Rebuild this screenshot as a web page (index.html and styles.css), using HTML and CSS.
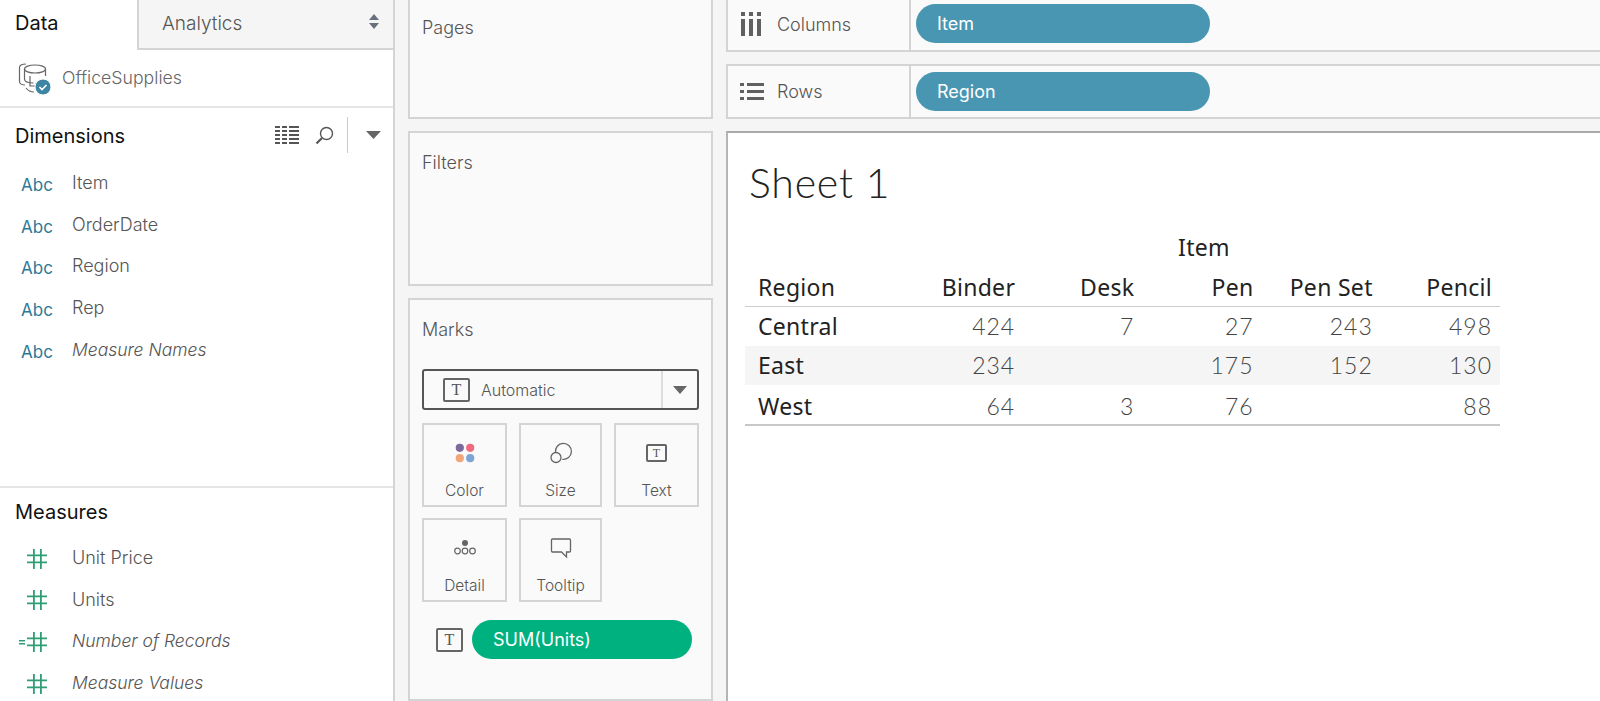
FILE: index.html
```html
<!DOCTYPE html>
<html lang="en">
<head>
<meta charset="utf-8">
<title>Sheet 1</title>
<link rel="stylesheet" href="styles.css">
</head>
<body>
<div class="app">
  <aside class="sidebar">
    <div class="tabs">
      <div class="tab tab-active">Data</div>
      <div class="tab tab-other"><span>Analytics</span>
        <svg class="updown" width="12" height="15" viewBox="0 0 12 15"><path d="M6 0l5 6H1zM6 15l-5-6h10z" fill="#67707c"/></svg>
      </div>
    </div>
    <div class="source">
      <svg class="source-icon" width="34" height="34" viewBox="0 0 34 34" fill="none" stroke="#666" stroke-width="1.2">
        <path d="M8 2C4.500 2 1.500 3 1.500 5.500v14c0 2 2.500 3.500 5.500 3.500"/>
        <ellipse cx="17" cy="7" rx="10.500" ry="4" fill="#fff"/>
        <path d="M6.500 7v10c0 2.500 4 4 9 4M27.500 7v7"/>
        <path d="M12 14v10h8M17.500 21l3 3-3 3M8 26c2 2.500 4 4 8 4"/>
        <circle cx="25" cy="25" r="8" fill="#3c85a3" stroke="#fff" stroke-width="1"/>
        <path d="M21.500 25l2.500 2.500 4.500-4.500" stroke="#fff" stroke-width="1.600"/>
      </svg>
      <span>OfficeSupplies</span>
    </div>
    <section class="dims">
      <div class="sec-head">
        <h2>Dimensions</h2>
        <div class="tools">
          <svg width="24" height="18" viewBox="0 0 24 18" fill="#555"><path d="M0 0h5v2H0zM7 0h5v2H7zM14 0h10v2H14zM0 4h5v2H0zM7 4h5v2H7zM14 4h10v2H14zM0 8h5v2H0zM7 8h5v2H7zM14 8h10v2H14zM0 12h5v2H0zM7 12h5v2H7zM14 12h10v2H14zM0 16h5v2H0zM7 16h5v2H7zM14 16h10v2H14z"/></svg>
          <svg class="search" width="19" height="19" viewBox="0 0 19 19" fill="none" stroke="#555"><circle cx="11.500" cy="7.500" r="6" stroke-width="1.400"/><path d="M7 12l-5.500 5.500" stroke-width="2.200"/></svg>
          <i class="tool-sep"></i>
          <svg class="menu-arrow" width="15" height="8" viewBox="0 0 15 8"><path d="M0 0h15l-7.500 8z" fill="#666"/></svg>
        </div>
      </div>
      <ul class="fields">
        <li><span class="abc">Abc</span><span>Item</span></li>
        <li><span class="abc">Abc</span><span>OrderDate</span></li>
        <li><span class="abc">Abc</span><span>Region</span></li>
        <li><span class="abc">Abc</span><span>Rep</span></li>
        <li><span class="abc">Abc</span><em>Measure Names</em></li>
      </ul>
    </section>
    <section class="meas">
      <div class="sec-head"><h2>Measures</h2></div>
      <ul class="fields fields-m">
        <li><svg class="hash" width="28" height="20" viewBox="0 0 28 20"><use href="#h"/></svg><span>Unit Price</span></li>
        <li><svg class="hash" width="28" height="20" viewBox="0 0 28 20"><use href="#h"/></svg><span>Units</span></li>
        <li><svg class="hash" width="28" height="20" viewBox="0 0 28 20"><path d="M0 8h6v1.500H0zM0 11h6v1.500H0z" fill="#2f9e75"/><use href="#h"/></svg><em>Number of Records</em></li>
        <li><svg class="hash" width="28" height="20" viewBox="0 0 28 20"><use href="#h"/></svg><em>Measure Values</em></li>
      </ul>
      <svg class="defs" width="0" height="0"><defs><g id="h" fill="#2f9e75"><path d="M8 5.500h20v1.800H8zM8 12.500h20v1.800H8zM14 0h1.800v20H14zM21 0h1.800v20H21z"/></g></defs></svg>
    </section>
  </aside>

  <div class="cards">
    <section class="card card-pages"><h3>Pages</h3></section>
    <section class="card card-filters"><h3>Filters</h3></section>
    <section class="card card-marks">
      <h3>Marks</h3>
      <div class="select">
        <div class="select-main">
          <span class="t-box">T</span>
          <span>Automatic</span>
        </div>
        <div class="select-arrow"><svg width="15" height="8" viewBox="0 0 15 8"><path d="M0 0h14l-7 8z" fill="#666"/></svg></div>
      </div>
      <div class="mark-grid">
        <div class="mark">
          <svg width="24" height="22" viewBox="0 0 24 22"><circle cx="6.800" cy="5.800" r="4.100" fill="#7c6a9c"/><circle cx="17.200" cy="5.800" r="4.100" fill="#ef6a7e"/><circle cx="6.800" cy="16.200" r="4.100" fill="#f2a67c"/><circle cx="17.200" cy="16.200" r="4.100" fill="#7ea6d4"/></svg>
          <span>Color</span>
        </div>
        <div class="mark">
          <svg width="24" height="22" viewBox="0 0 24 22" fill="none" stroke="#666" stroke-width="1.300"><path d="M6.500 10.500a8 8 0 1 1 6.800 6.800"/><circle cx="7" cy="15.500" r="5"/></svg>
          <span>Size</span>
        </div>
        <div class="mark">
          <span class="t-box t-small">T</span>
          <span>Text</span>
        </div>
        <div class="mark">
          <svg width="24" height="22" viewBox="0 0 24 22" fill="none" stroke="#666" stroke-width="1.200"><circle cx="12" cy="6" r="3" fill="#666" stroke="none"/><circle cx="4.500" cy="14" r="2.800"/><circle cx="12" cy="14" r="2.800"/><circle cx="19.500" cy="14" r="2.800"/></svg>
          <span>Detail</span>
        </div>
        <div class="mark">
          <svg width="24" height="22" viewBox="0 0 24 22" fill="none" stroke="#666" stroke-width="1.300"><path d="M3.500 2h17a1 1 0 0 1 1 1v11a1 1 0 0 1-1 1h-3v5l-5-5h-9a1 1 0 0 1-1-1V3a1 1 0 0 1 1-1z"/></svg>
          <span>Tooltip</span>
        </div>
      </div>
      <div class="mark-pill-row">
        <span class="t-box">T</span>
        <div class="pill pill-green">SUM(Units)</div>
      </div>
    </section>
  </div>

  <main class="main">
    <div class="shelf shelf-cols">
      <div class="shelf-label">
        <svg width="20" height="24" viewBox="0 0 20 24" fill="#606060"><path d="M0 0h4v4H0zM8 0h4v4H8zM16 0h4v4h-4zM0 7h4v17H0zM8 7h4v17H8zM16 7h4v17h-4z"/></svg>
        <span>Columns</span>
      </div>
      <div class="shelf-body"><div class="pill pill-blue">Item</div></div>
    </div>
    <div class="shelf shelf-rows">
      <div class="shelf-label">
        <svg width="24" height="20" viewBox="0 0 24 20" fill="#606060"><path d="M0 1h4v3H0zM7 1h17v3H7zM0 8h4v3H0zM7 8h17v3H7zM0 15h4v3H0zM7 15h17v3H7z"/></svg>
        <span>Rows</span>
      </div>
      <div class="shelf-body"><div class="pill pill-blue">Region</div></div>
    </div>
    <div class="view">
      <h1>Sheet 1</h1>
      <table class="crosstab">
        <thead>
          <tr class="row-group"><th></th><th colspan="5" class="group">Item</th></tr>
          <tr class="row-head"><th class="region">Region</th><th>Binder</th><th>Desk</th><th>Pen</th><th>Pen Set</th><th>Pencil</th></tr>
        </thead>
        <tbody>
          <tr><th class="region">Central</th><td>424</td><td>7</td><td>27</td><td>243</td><td>498</td></tr>
          <tr class="band"><th class="region">East</th><td>234</td><td></td><td>175</td><td>152</td><td>130</td></tr>
          <tr class="last"><th class="region">West</th><td>64</td><td>3</td><td>76</td><td></td><td>88</td></tr>
        </tbody>
      </table>
    </div>
  </main>
</div>
</body>
</html>
```
FILE: styles.css
```css
* { box-sizing: border-box; }
html, body { margin: 0; padding: 0; }
body { font-family: Inter, "Liberation Sans", sans-serif; color: #555; background: #f5f5f5; overflow: hidden; }
.app { display: flex; width: 1600px; height: 701px; overflow: hidden; }

.sidebar { width: 395px; flex: none; background: #fff; border-right: 2px solid #d4d4d4; display: flex; flex-direction: column; font-family: Inter, sans-serif; font-size: 18px; font-weight: 300; }
.tabs { display: flex; height: 50px; flex: none; }
.tab { height: 50px; font-size: 19px; line-height: 46px; }
.tab-active { width: 137px; padding-left: 15px; color: #111; font-size: 20px; font-weight: 400; }
.tab-other { flex: 1; padding: 0 13px 0 23px; display: flex; align-items: center; justify-content: space-between; background: #f5f5f5; border-left: 2px solid #d4d4d4; border-bottom: 2px solid #d4d4d4; color: #555; }
.tab-other span { line-height: 44px; }
.updown { margin-top: -5px; }
.source { height: 58px; flex: none; display: flex; align-items: center; gap: 10px; padding: 0 0 0 18px; border-bottom: 2px solid #e6e6e6; color: #666; font-size: 17.700px; }
.source span { margin-bottom: 2px; }
.source-icon { margin-top: 2px; }
.sec-head { display: flex; align-items: center; justify-content: space-between; padding-left: 15px; }
h2 { margin: 0; padding-top: 2px; font-size: 20px; font-weight: 400; color: #111; }
.dims { height: 380px; flex: none; border-bottom: 2px solid #e6e6e6; padding-top: 9px; }
.dims .sec-head { height: 36px; }
.tools { display: flex; align-items: center; padding-right: 12px; }
.search { margin-left: 16px; }
.tool-sep { display: block; width: 1px; height: 36px; background: #ccc; margin: 0 18px 0 13px; }
.fields { list-style: none; margin: 9px 0 0; padding: 0; }
.fields li { display: flex; align-items: center; height: 41.600px; color: #555; }
.fields em { font-style: italic; font-size: 17.500px; }
.abc { width: 72px; padding-left: 21px; color: #2e7a97; font-size: 17px; font-weight: 400; line-height: 1; padding-top: 6px; flex: none; }
.meas { flex: 1; padding-top: 10px; }
.meas .sec-head { height: 26px; }
.fields-m { margin-top: 13px; }
.hash { margin: 2px 25px 0 19px; flex: none; }
.defs { display: block; }

.cards { width: 305px; flex: none; margin-left: 13px; display: flex; flex-direction: column; gap: 12px; margin-top: -4px; }
.card { background: #fafafa; border: 2px solid #d4d4d4; padding: 0 12px; }
.card h3 { margin: 0; font-family: Inter, sans-serif; font-size: 18px; font-weight: 300; color: #555; }
.card-pages { height: 123px; padding-top: 19px; }
.card-filters { height: 155px; padding-top: 19px; }
.card-marks { flex: 1; padding-top: 19px; font-family: Inter, sans-serif; }
.select { margin-top: 29px; height: 41px; border: 2px solid #555; border-radius: 3px; display: flex; background: #fafafa; }
.select-main { flex: 1; display: flex; align-items: center; gap: 11px; padding-left: 19px; font-size: 16px; font-weight: 300; color: #555; }
.select-arrow { width: 36px; border-left: 2px solid #ddd; display: flex; align-items: center; justify-content: center; }
.t-box { display: inline-flex; align-items: center; justify-content: center; width: 27px; height: 24px; border: 2px solid #666; border-radius: 2px; font-family: "Liberation Serif", serif; font-size: 16px; color: #555; flex: none; }
.t-small { width: 21px; height: 18px; font-size: 12px; margin-bottom: 2px; }
.mark-grid { display: grid; grid-template-columns: 85px 83px 85px; column-gap: 12px; row-gap: 11px; margin-top: 13px; width: 277px; }
.mark { height: 84px; border: 2px solid #d4d4d4; display: flex; flex-direction: column; align-items: center; justify-content: flex-end; font-size: 15.500px; font-weight: 300; color: #555; padding-bottom: 5px; gap: 17px; }
.mark-pill-row { display: flex; align-items: center; gap: 9px; margin: 18px 0 0 14px; }
.pill { border-radius: 20px; color: #fff; font-family: Inter, sans-serif; font-size: 18px; font-weight: 400; display: flex; align-items: center; flex: none; }
.pill-green { width: 220px; height: 39px; background: #00b180; padding-left: 21px; }
.pill-blue { width: 294px; height: 39px; background: #4996b2; padding-left: 21px; }

.main { flex: 1; margin-left: 13px; display: flex; flex-direction: column; min-width: 0; margin-top: -4px; }
.shelf { display: flex; background: #fafafa; border: 2px solid #d4d4d4; border-right: 0; flex: none; }
.shelf-cols { height: 56px; }
.shelf-rows { height: 55px; margin-top: 12px; }
.shelf-label { width: 183px; flex: none; display: flex; align-items: center; gap: 16px; padding-left: 13px; border-right: 2px solid #d4d4d4; font-family: Inter, sans-serif; font-size: 18px; font-weight: 300; color: #555; }
.shelf-rows .shelf-label { gap: 13px; padding-left: 12px; }
.shelf-body { flex: 1; display: flex; align-items: center; padding-left: 5px; }
.shelf-cols .shelf-body { padding-bottom: 2px; }
.view { flex: 1; margin-top: 12px; background: #fff; border-top: 2px solid #aaa; border-left: 2px solid #b5b5b5; padding: 24px 0 0 17px; color: #222; }
.view h1 { margin: 0; font-family: Lato, sans-serif; font-size: 41px; font-weight: 300; line-height: 52px; color: #222; padding-left: 4px; letter-spacing: .8px; }
.crosstab { border-collapse: collapse; table-layout: fixed; width: 755px; margin-top: 20px; font-family: "Noto Sans", sans-serif; font-size: 23px; letter-spacing: .3px; }
.crosstab th { font-weight: 400; color: #222; }
.crosstab th, .crosstab td { padding: 0 8px 0 0; text-align: right; height: 39.500px; }
.crosstab tr > :first-child { width: 159px; }
.crosstab .region { text-align: left; padding-left: 13px; }
.crosstab td { font-family: Lato, sans-serif; color: #444; font-weight: 300; letter-spacing: 1px; }
.crosstab .group { text-align: center; padding: 0 0 4px 4px; }
.row-group th { height: 39px !important; }
.row-head th { height: 38px !important; border-bottom: 1px solid #ccc; }
.band > * { background: #f5f5f5; }
.crosstab .last > * { border-bottom: 2px solid #c8c8c8; padding-top: 3px; }
```
